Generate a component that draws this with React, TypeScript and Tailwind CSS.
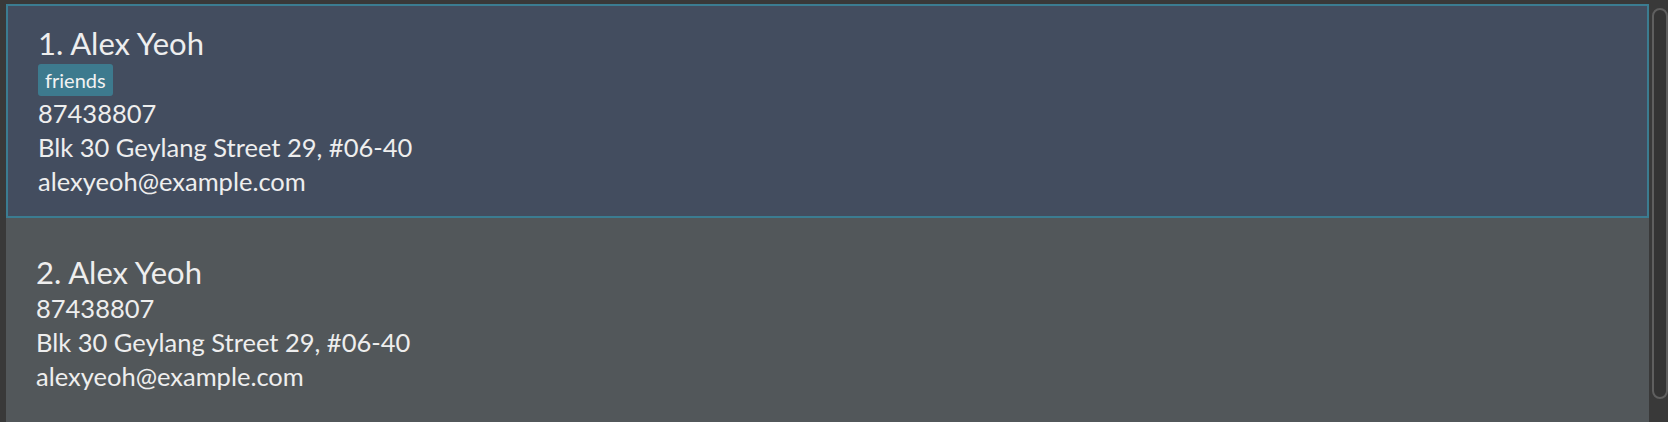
import React from "react";

const font = "font-['Lato','Liberation_Sans',sans-serif]";

function Line({ children }: { children: React.ReactNode }) {
  return <div className="text-[25.5px] leading-[34px] text-[#eeeeee] whitespace-nowrap">{children}</div>;
}

export default function App() {
  return (
    <div className={`w-[1668px] h-[422px] bg-[#393939] flex overflow-hidden ${font}`}>
      <div className="w-[1658px] flex flex-col pt-[4px] pl-[6px]">
        <div className="h-[214px] shrink-0 border-2 border-[#3b7c91] bg-[#434d5f] pl-[30px] pt-[19px]">
          <div className="text-[31px] leading-[37px] text-[#eeeeee] whitespace-nowrap">1. Alex Yeoh</div>
          <div className="flex mt-[2px]">
            <span className="h-[32px] px-[7px] rounded-[3px] bg-[#3d7a8e] text-[20px] leading-[32px] text-[#f2f2f2]">friends</span>
          </div>
          <Line>87438807</Line>
          <Line>Blk 30 Geylang Street 29, #06-40</Line>
          <Line>alexyeoh@example.com</Line>
        </div>
        <div className="flex-1 bg-[#52575a] pl-[30px] pt-[35px]">
          <div className="text-[31px] leading-[38px] text-[#eeeeee] whitespace-nowrap">2. Alex Yeoh</div>
          <Line>87438807</Line>
          <Line>Blk 30 Geylang Street 29, #06-40</Line>
          <Line>alexyeoh@example.com</Line>
        </div>
      </div>
      <div className="flex-1 pt-[8px] pl-[3px] pb-[23px] flex">
        <div className="w-[16px] shrink-0 h-full rounded-[9px] border-2 border-[#5f5f5f] bg-[#343434]" />
      </div>
    </div>
  );
}
